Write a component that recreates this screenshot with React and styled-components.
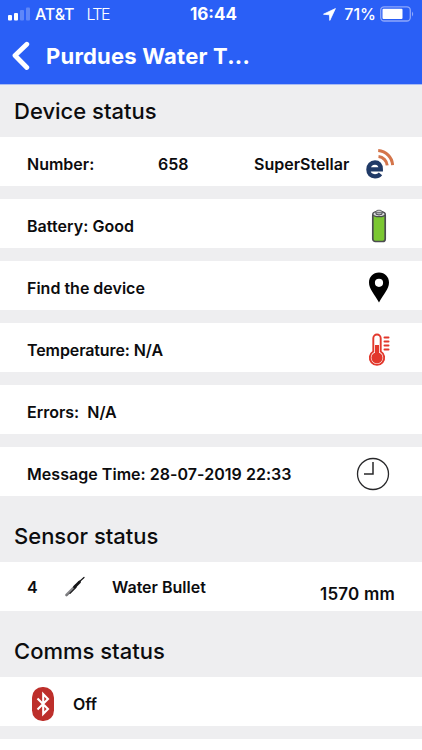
import React from 'react';
import styled, { createGlobalStyle } from 'styled-components';

const GlobalStyle = createGlobalStyle`
  * {
    box-sizing: border-box;
  }

  body {
    margin: 0;
    background: #ffffff;
    color: #0c0c0e;
    font-family: Inter, 'Liberation Sans', sans-serif;
  }

  svg {
    display: block;
    flex: none;
  }
`;

const Screen = styled.div`
  width: 422px;
  height: 750px;
  overflow: hidden;
`;

const Header = styled.header`
  height: 85px;
  background: #2a5ff6;
  border-bottom: 1px solid #a9bbf3;
  color: #ffffff;
`;

const StatusBar = styled.div`
  display: grid;
  grid-template-columns: 1fr auto 1fr;
  align-items: center;
  height: 28px;
  padding: 0 8px;
  font-size: 16px;
  line-height: 20px;
`;

const Carrier = styled.div`
  display: flex;
  align-items: center;
`;

const CarrierName = styled.span`
  margin-left: 5px;
  font-weight: 500;
  letter-spacing: -0.1px;
`;

const Network = styled.span`
  margin-left: 12px;
  font-weight: 300;
  letter-spacing: -1.6px;
`;

const Clock = styled.span`
  padding-left: 5px;
  font-size: 17px;
  font-weight: 700;
`;

const Power = styled.div`
  display: flex;
  justify-content: flex-end;
  align-items: center;
`;

const Percent = styled.span`
  margin: 0 4px 0 8px;
  font-weight: 500;
`;

const TitleBar = styled.div`
  display: flex;
  align-items: center;
  height: 56px;
  padding-left: 12px;
`;

const Title = styled.h1`
  margin: 0 0 0 16px;
  font-size: 22px;
  font-weight: 700;
  letter-spacing: 0.22px;
  line-height: 28px;
`;

const Content = styled.main`
  height: 654px;
  background: #eeeef0;
`;

const SectionTitle = styled.h2`
  display: flex;
  align-items: center;
  height: ${({ $height }) => $height};
  margin: 0;
  padding: ${({ $top }) => $top || '0px'} 14px 0;
  font-size: 22px;
  font-weight: 500;
`;

const Rows = styled.div`
  display: flex;
  flex-direction: column;
  gap: 13.1px;
`;

const Row = styled.div`
  display: flex;
  align-items: center;
  height: 49px;
  padding: ${({ $top }) => $top || '4px'} 27px 0;
  background: #ffffff;
  font-size: 16px;
  font-weight: 600;
  line-height: 20px;
`;

const Label = styled.span`
  width: ${({ $width }) => $width || 'auto'};
  letter-spacing: ${({ $spacing }) => $spacing || '0'};
  white-space: pre;
`;

const Reading = styled.span`
  margin: 13px 0 0 auto;
  font-size: 17px;
  letter-spacing: 0.2px;
`;

const IconSlot = styled.div`
  display: flex;
  justify-content: center;
  width: 36px;
  margin-left: auto;
  margin-right: ${({ $right }) => $right || '-2px'};
`;

const SensorIcon = styled.div`
  width: 48px;
`;

const CommsIcon = styled.div`
  width: 46px;
  padding-left: 5px;
`;

const SignalIcon = () => (
  <svg width="22" height="14" viewBox="0 0 22 14" fill="#ffffff">
    <rect x="0" y="8" width="4" height="5.5" rx="1" />
    <rect x="6" y="6" width="4" height="7.5" rx="1" />
    <rect x="12" y="3" width="4" height="10.5" rx="1" opacity="0.25" />
    <rect x="18" y="0.5" width="4" height="13" rx="1" opacity="0.25" />
  </svg>
);

const LocationIcon = () => (
  <svg width="13" height="13" viewBox="0 0 13 13" fill="#ffffff" stroke="#ffffff" strokeWidth="0.8" strokeLinejoin="round">
    <path d="M12.4.6.5 6.2l6 .6.3 5.6z" />
  </svg>
);

const PhoneBattery = () => (
  <svg width="34" height="16" viewBox="0 0 34 16">
    <rect x="0.7" y="0.8" width="29.6" height="14.2" rx="3.5" fill="none" stroke="#8ea8fb" strokeWidth="1.3" />
    <rect x="2.5" y="2.8" width="20" height="10.2" rx="1" fill="#ffffff" />
    <path d="M32 5.4q2.4 2.5 0 5z" fill="#8ea8fb" />
  </svg>
);

const BackIcon = () => (
  <svg width="18" height="30" viewBox="0 0 18 30" fill="none" stroke="#ffffff" strokeWidth="4.8" strokeLinecap="round" strokeLinejoin="round">
    <path d="M14.8 3.2 3 14.500 14.8 26.5" />
  </svg>
);

const BrandIcon = () => (
  <svg width="30" height="32" viewBox="0 0 30 32" fill="none">
    <path d="M4.500 21.300h12.300c0-4.500-2.200-6.800-5.800-6.800-4 0-6.600 2.800-6.600 7s2.600 6.800 6.600 6.800c2.500 0 4.200-.8 5.500-2.400" stroke="#203a67" strokeWidth="4.300" />
    <path d="M14.500 8.500a9.800 9.800 0 0 1 8.700 8.800M14.200 2.500a15.500 15.500 0 0 1 14.400 14.600" stroke="#d4754b" strokeWidth="3" />
  </svg>
);

const BatteryIcon = () => (
  <svg width="16" height="34" viewBox="0 0 16 34">
    <rect x="1.8" y="4" width="12.4" height="28.5" rx="2.500" fill="#7bc732" stroke="#4b4c50" strokeWidth="1.700" />
    <ellipse cx="8" cy="5" rx="6.2" ry="2.7" fill="#d9dadc" stroke="#4b4c50" strokeWidth="1.300" />
    <path d="M5 2.200v3q3 1.600 6 0v-3" fill="#aeb0b4" stroke="#4b4c50" />
    <ellipse cx="8" cy="2.3" rx="3" ry="1.1" fill="#e8e8e8" stroke="#4b4c50" strokeWidth="0.8" />
  </svg>
);

const PinIcon = () => (
  <svg width="22" height="31" viewBox="0 0 22 31">
    <path fillRule="evenodd" d="M11 .5C5 .5 1 5 1 10.500c0 6.500 5.500 11.500 10 20 4.500-8.500 10-13.500 10-20C21 5 17 .5 11 .5Zm0 6.200a4.100 4.100 0 1 1 0 8.200 4.100 4.100 0 0 1 0-8.200Z" fill="#000000" />
  </svg>
);

const ThermometerIcon = () => (
  <svg width="22" height="34" viewBox="0 0 22 34" fill="none" stroke="#e2382c">
    <path d="M5.300 18.500V5.200a3.700 3.700 0 0 1 7.400 0v13.300a7.200 7.200 0 1 1-7.400 0Z" strokeWidth="1.900" />
    <circle cx="9" cy="24.8" r="5.6" fill="#e2382c" stroke="none" />
    <path d="M9 12v12" strokeWidth="4" />
    <path d="M16.500 4.500h4M16.500 8.500h4M16.500 12.500h4M16.500 16.500h4" strokeWidth="2" strokeLinecap="round" />
  </svg>
);

const ClockIcon = () => (
  <svg width="34" height="34" viewBox="0 0 34 34" fill="none" stroke="#28282a">
    <circle cx="17" cy="17" r="15.5" strokeWidth="1.3" />
    <path d="M17 5v12H8" strokeWidth="1.5" />
  </svg>
);

const ProbeIcon = () => (
  <svg width="22" height="22" viewBox="0 0 22 22" strokeLinecap="round">
    <path d="M2.500 19 12 9.500" stroke="#77777a" strokeWidth="2.6" />
    <path d="m2.500 18 9-9" stroke="#a9a9ab" strokeWidth="0.8" />
    <path d="m10.500 11 5-5" stroke="#151517" strokeWidth="2.8" />
    <path d="m6 17.300 6-6M15 6l5-4.500" stroke="#151517" strokeWidth="1.2" />
  </svg>
);

const BluetoothIcon = () => (
  <svg width="22" height="34" viewBox="0 0 22 34" fill="none">
    <rect width="22" height="34" rx="10.5" fill="#bd2f2b" />
    <path d="m5.500 11.500 10.500 10.500-4.800 5V7L16 12 5.500 22.500" stroke="#ffffff" strokeWidth="2.1" />
  </svg>
);

const App = () => (
  <>
    <GlobalStyle />
    <Screen>
      <Header>
        <StatusBar>
          <Carrier>
            <SignalIcon />
            <CarrierName>AT&amp;T</CarrierName>
            <Network>LTE</Network>
          </Carrier>
          <Clock>16:44</Clock>
          <Power>
            <LocationIcon />
            <Percent>71%</Percent>
            <PhoneBattery />
          </Power>
        </StatusBar>
        <TitleBar>
          <BackIcon />
          <Title>Purdues Water T...</Title>
        </TitleBar>
      </Header>
      <Content>
        <SectionTitle $height="52px">Device status</SectionTitle>
        <Rows>
          <Row>
            <Label $width="131px">Number:</Label>
            <Label $width="96px">658</Label>
            <Label>SuperStellar</Label>
            <IconSlot>
              <BrandIcon />
            </IconSlot>
          </Row>
          <Row>
            <Label $spacing="0.05px">Battery: Good</Label>
            <IconSlot>
              <BatteryIcon />
            </IconSlot>
          </Row>
          <Row>
            <Label>Find the device</Label>
            <IconSlot>
              <PinIcon />
            </IconSlot>
          </Row>
          <Row>
            <Label $spacing="-0.1px">Temperature: N/A</Label>
            <IconSlot>
              <ThermometerIcon />
            </IconSlot>
          </Row>
          <Row>
            <Label>{'Errors:  N/A'}</Label>
          </Row>
          <Row>
            <Label $spacing="0.04px">Message Time: 28-07-2019 22:33</Label>
            <IconSlot $right="4px">
              <ClockIcon />
            </IconSlot>
          </Row>
        </Rows>
        <SectionTitle $height="65.5px" $top="14px">Sensor status</SectionTitle>
        <Row $top="2px">
          <Label $width="37px">4</Label>
          <SensorIcon>
            <ProbeIcon />
          </SensorIcon>
          <Label>Water Bullet</Label>
          <Reading>1570 mm</Reading>
        </Row>
        <SectionTitle $height="66px" $top="14px">Comms status</SectionTitle>
        <Row $top="5px">
          <CommsIcon>
            <BluetoothIcon />
          </CommsIcon>
          <Label>Off</Label>
        </Row>
      </Content>
    </Screen>
  </>
);

export default App;
